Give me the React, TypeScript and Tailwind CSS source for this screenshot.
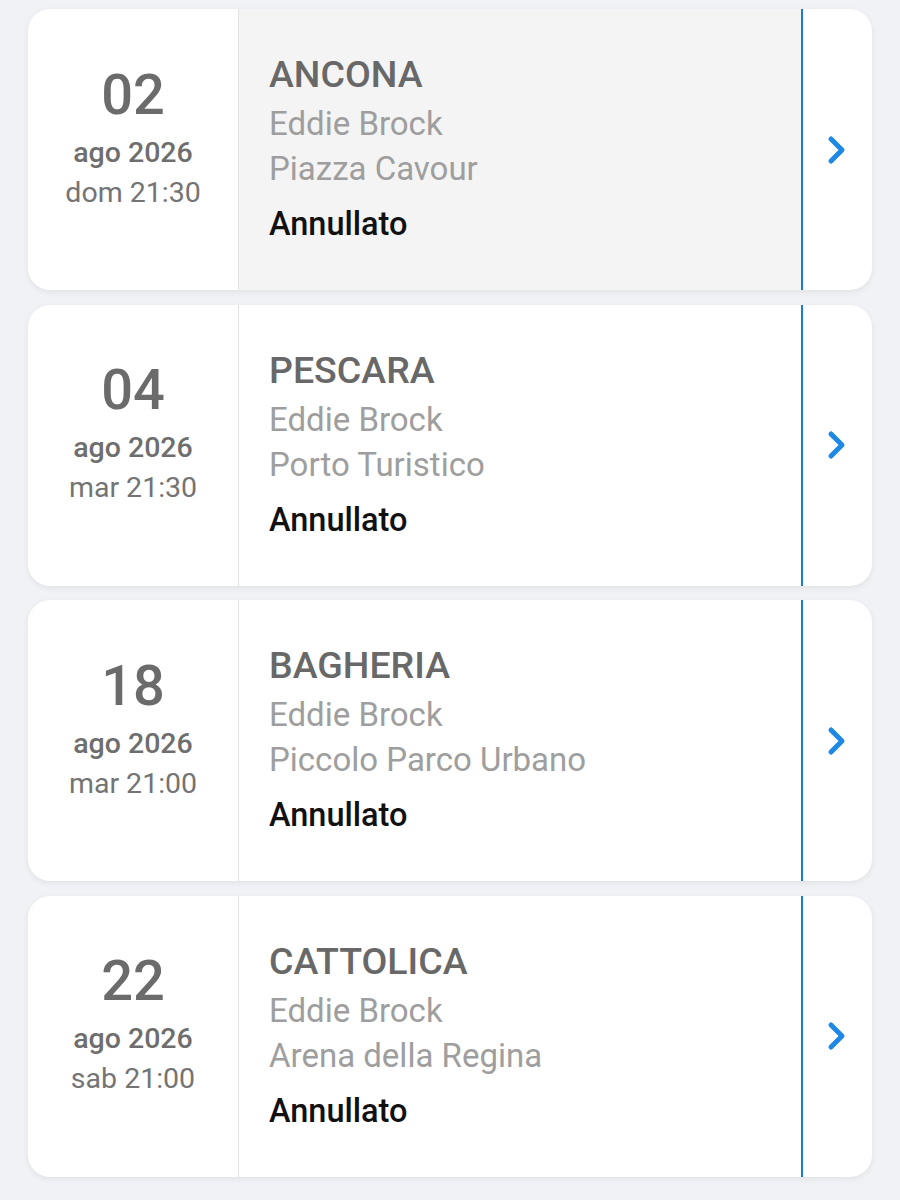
import React from "react";

type Event = {
    day: string;
    month: string;
    time: string;
    city: string;
    artist: string;
    venue: string;
    status: string;
    active?: boolean;
};

const events: Event[] = [
    { day: "02", month: "ago 2026", time: "dom 21:30", city: "ANCONA", artist: "Eddie Brock", venue: "Piazza Cavour", status: "Annullato", active: true },
    { day: "04", month: "ago 2026", time: "mar 21:30", city: "PESCARA", artist: "Eddie Brock", venue: "Porto Turistico", status: "Annullato" },
    { day: "18", month: "ago 2026", time: "mar 21:00", city: "BAGHERIA", artist: "Eddie Brock", venue: "Piccolo Parco Urbano", status: "Annullato" },
    { day: "22", month: "ago 2026", time: "sab 21:00", city: "CATTOLICA", artist: "Eddie Brock", venue: "Arena della Regina", status: "Annullato" },
];

const Chevron: React.FC = () => (
    <svg width="20" height="30" viewBox="0 0 20 30" fill="none">
        <polyline points="4,4 15,15 4,26" stroke="#1e88e5" strokeWidth="5" strokeLinecap="round" strokeLinejoin="round" />
    </svg>
);

const EventCard: React.FC<{ ev: Event }> = ({ ev }) => {
    return (
        <div className="flex h-[281px] rounded-[22px] bg-white overflow-hidden shadow-[0_2px_6px_rgba(0,0,0,0.07)]">
            {/* date */}
            <div className="w-[211px] shrink-0 border-r border-[#e2e2e2] flex flex-col items-center justify-center pb-6">
                <p className="text-[56px] leading-[64px] font-medium text-[#6b6b6b]">{ev.day}</p>
                <p className="mt-[6px] text-[28.5px] leading-[40px] font-medium text-[#6e6e6e]">{ev.month}</p>
                <p className="text-[28.5px] leading-[40px] text-[#747474]">{ev.time}</p>
            </div>

            {/* info */}
            <div className={`flex-1 flex flex-col justify-center pl-[30px] border-r-2 border-[#1a7bd0] ${ev.active ? "bg-[#f4f4f4]" : "bg-white"}`}>
                <p className="text-[37.5px] leading-[45px] font-medium text-[#686868] mb-[4px]">{ev.city}</p>
                <p className="text-[33px] leading-[45px] text-[#9e9e9e]">{ev.artist}</p>
                <p className="text-[33px] leading-[45px] text-[#9e9e9e]">{ev.venue}</p>
                <p className="mt-[11px] text-[32.5px] leading-[45px] font-medium text-[#111111]">{ev.status}</p>
            </div>

            {/* arrow */}
            <div className="w-[69px] shrink-0 flex items-center justify-center pr-[2px]">
                <Chevron />
            </div>
        </div>
    );
};

export default function App() {
    return (
        <div className="min-h-[1200px] bg-[#f0f2f5] px-[28px] pt-[9px] pb-[25px] flex flex-col gap-[14.5px]" style={{ fontFamily: "Roboto, 'Noto Sans', sans-serif" }}>
            {events.map((ev) => (
                <EventCard key={ev.day} ev={ev} />
            ))}
        </div>
    );
}
